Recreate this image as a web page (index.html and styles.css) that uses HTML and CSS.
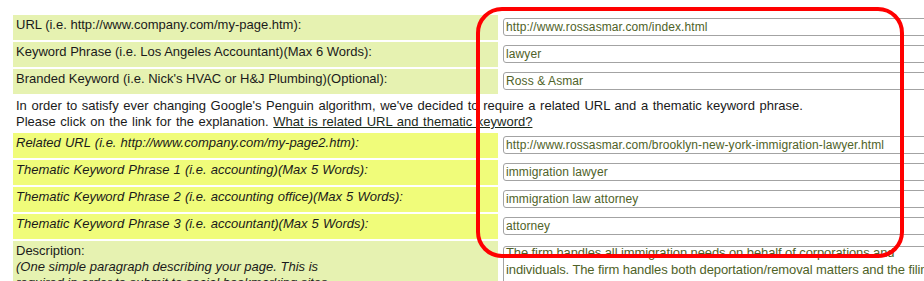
FILE: index.html
```html
<!DOCTYPE html>
<html>
<head>
<meta charset="utf-8">
<link rel="stylesheet" href="styles.css">
</head>
<body>
<div class="form">
  <div class="label">URL (i.e. http://www.company.com/my-page.htm):</div>
  <div class="field"><input class="input" type="text" value="http://www.rossasmar.com/index.html"></div>

  <div class="label">Keyword Phrase (i.e. Los Angeles Accountant)(Max 6 Words):</div>
  <div class="field"><input class="input" type="text" value="lawyer"></div>

  <div class="label">Branded Keyword (i.e. Nick's HVAC or H&amp;J Plumbing)(Optional):</div>
  <div class="field"><input class="input" type="text" value="Ross &amp; Asmar"></div>

  <div class="note">In order to satisfy ever changing Google's Penguin algorithm, we've decided to require a related URL and a thematic keyword phrase.<br>Please click on the link for the explanation. <a class="link" href="#">What is related URL and thematic keyword?</a></div>

  <div class="label hl">Related URL (i.e. http://www.company.com/my-page2.htm):</div>
  <div class="field"><input class="input" type="text" value="http://www.rossasmar.com/brooklyn-new-york-immigration-lawyer.html"></div>

  <div class="label hl">Thematic Keyword Phrase 1 (i.e. accounting)(Max 5 Words):</div>
  <div class="field"><input class="input" type="text" value="immigration lawyer"></div>

  <div class="label hl">Thematic Keyword Phrase 2 (i.e. accounting office)(Max 5 Words):</div>
  <div class="field"><input class="input" type="text" value="immigration law attorney"></div>

  <div class="label hl">Thematic Keyword Phrase 3 (i.e. accountant)(Max 5 Words):</div>
  <div class="field"><input class="input" type="text" value="attorney"></div>

  <div class="label desc">Description:<br><em>(One simple paragraph describing your page. This is<br>required in order to submit to social bookmarking sites</em></div>
  <div class="field"><div class="area"><p class="area-text">The firm handles all immigration needs on behalf of corporations and<br>individuals. The firm handles both deportation/removal matters and the filing of<br>petitions for immigrants and nonimmigrants in the United States. The firm's attorneys</p></div></div>
</div>
<div class="highlight"></div>
</body>
</html>
```

FILE: styles.css
```css
html, body {
  margin: 0;
  padding: 0;
  overflow: hidden;
  background: #ffffff;
}

body {
  position: relative;
  width: 924px;
  height: 281px;
  font-family: "Liberation Sans", Arial, sans-serif;
  font-size: 13px;
  color: #1a1a1a;
}

.form {
  display: grid;
  grid-template-columns: 485px 600px;
  column-gap: 2px;
  row-gap: 2px;
  padding: 15px 0 0 13px;
}

.label {
  background: #e6f2b1;
  line-height: 16px;
  padding: 2px 3px 7px 3px;
  height: 25px;
  box-sizing: border-box;
}

.label.hl {
  background: #f0fc7a;
  font-style: italic;
  word-spacing: 0.5px;
}

.label.desc {
  height: 60px;
}

.field {
  padding: 3px 3px 0 3px;
  height: 25px;
  box-sizing: border-box;
}

.input {
  display: block;
  box-sizing: border-box;
  width: 560px;
  height: 18px;
  margin: 0;
  padding: 0 2px;
  border: 1px solid #a3a3a3;
  border-radius: 3px;
  font-family: "Liberation Sans", Arial, sans-serif;
  font-size: 12px;
  letter-spacing: 0.1px;
  color: #4f6228;
  background: #ffffff;
  outline: none;
}

.note {
  grid-column: 1 / 3;
  line-height: 16px;
  padding: 2px 3px 1px 3px;
  height: 35px;
  box-sizing: border-box;
  word-spacing: 1px;
}

.link {
  color: #1a2a1a;
  text-decoration: underline;
}

.area {
  box-sizing: border-box;
  width: 560px;
  height: 60px;
  margin-top: 2px;
  padding: 0 2px;
  border: 1px solid #a3a3a3;
  border-radius: 3px;
  overflow: hidden;
  background: #ffffff;
}

.area-text {
  margin: -3px 0 0 0;
  font-size: 13px;
  line-height: 17px;
  color: #4f6228;
  white-space: nowrap;
  letter-spacing: -0.1px;
}

.highlight {
  position: absolute;
  left: 476px;
  top: 7px;
  width: 428px;
  height: 251px;
  box-sizing: border-box;
  border: 4px solid #ff0000;
  border-radius: 26px;
  pointer-events: none;
}
```
